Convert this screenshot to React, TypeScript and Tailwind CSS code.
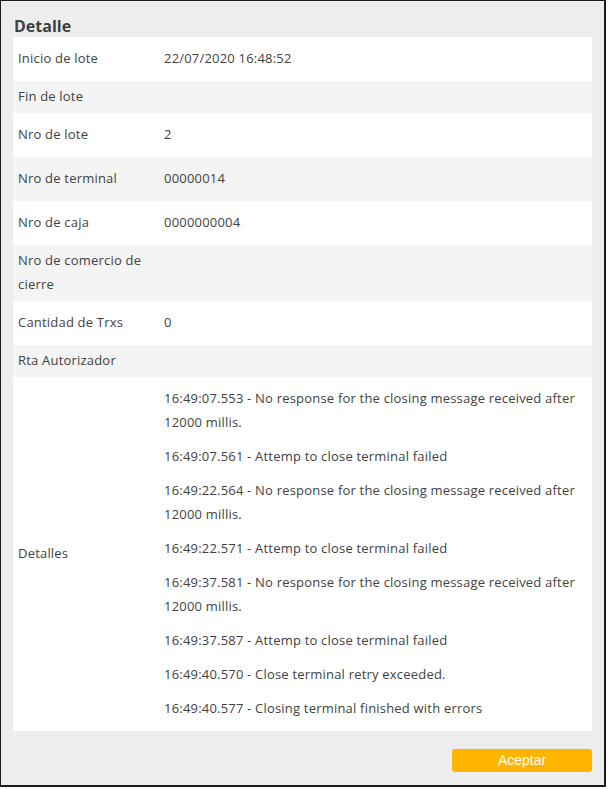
import React from 'react'

const rows: { label: string; value?: string[] }[] = [
  { label: 'Inicio de lote', value: ['22/07/2020 16:48:52'] },
  { label: 'Fin de lote' },
  { label: 'Nro de lote', value: ['2'] },
  { label: 'Nro de terminal', value: ['00000014'] },
  { label: 'Nro de caja', value: ['0000000004'] },
  { label: 'Nro de comercio de cierre' },
  { label: 'Cantidad de Trxs', value: ['0'] },
  { label: 'Rta Autorizador' },
  {
    label: 'Detalles',
    value: [
      '16:49:07.553 - No response for the closing message received after 12000 millis.',
      '16:49:07.561 - Attemp to close terminal failed',
      '16:49:22.564 - No response for the closing message received after 12000 millis.',
      '16:49:22.571 - Attemp to close terminal failed',
      '16:49:37.581 - No response for the closing message received after 12000 millis.',
      '16:49:37.587 - Attemp to close terminal failed',
      '16:49:40.570 - Close terminal retry exceeded.',
      '16:49:40.577 - Closing terminal finished with errors',
    ],
  },
]

export default function App() {
  return (
    <div className="w-[608px] h-[789px] bg-white">
      <div
        className="w-[606px] h-[787px] bg-[#ededed] border-l border-t border-r-2 border-b-2 border-[#1c1c1c] flex flex-col text-[#424242]"
        style={{ fontFamily: '"Open Sans", "Noto Sans", sans-serif' }}
      >
        <h2 className="text-[16px] font-bold leading-[20px] pl-[13px] pt-[15px] pb-[1px] text-[#3f3f3f]">Detalle</h2>
        <div className="mx-[12px] bg-white text-[13px] leading-[24px] tracking-[0.2px]">
          {rows.map((row, i) => (
            <div key={row.label} className={`flex ${i % 2 === 1 ? 'bg-[#f4f4f4]' : 'bg-white'}`}>
              <div className="w-[146px] shrink-0 px-[5px] pt-[3px] pb-[5px] flex items-center">{row.label}</div>
              <div className="flex-1 pl-[5px] pr-[8px]">
                {row.value && (
                  <div className="pt-[9px] pb-[11px] flex flex-col gap-[10px]">
                    {row.value.map((v) => (
                      <p key={v}>{v}</p>
                    ))}
                  </div>
                )}
              </div>
            </div>
          ))}
        </div>
        <div className="flex justify-end mt-[18px] mr-[12px]">
          <button
            className="w-[140px] h-[23px] rounded-[3px] bg-[#ffb400] text-white text-[14px] leading-[23px]"
            style={{ fontFamily: '"Liberation Sans", Arial, sans-serif' }}
          >
            Aceptar
          </button>
        </div>
      </div>
    </div>
  )
}
